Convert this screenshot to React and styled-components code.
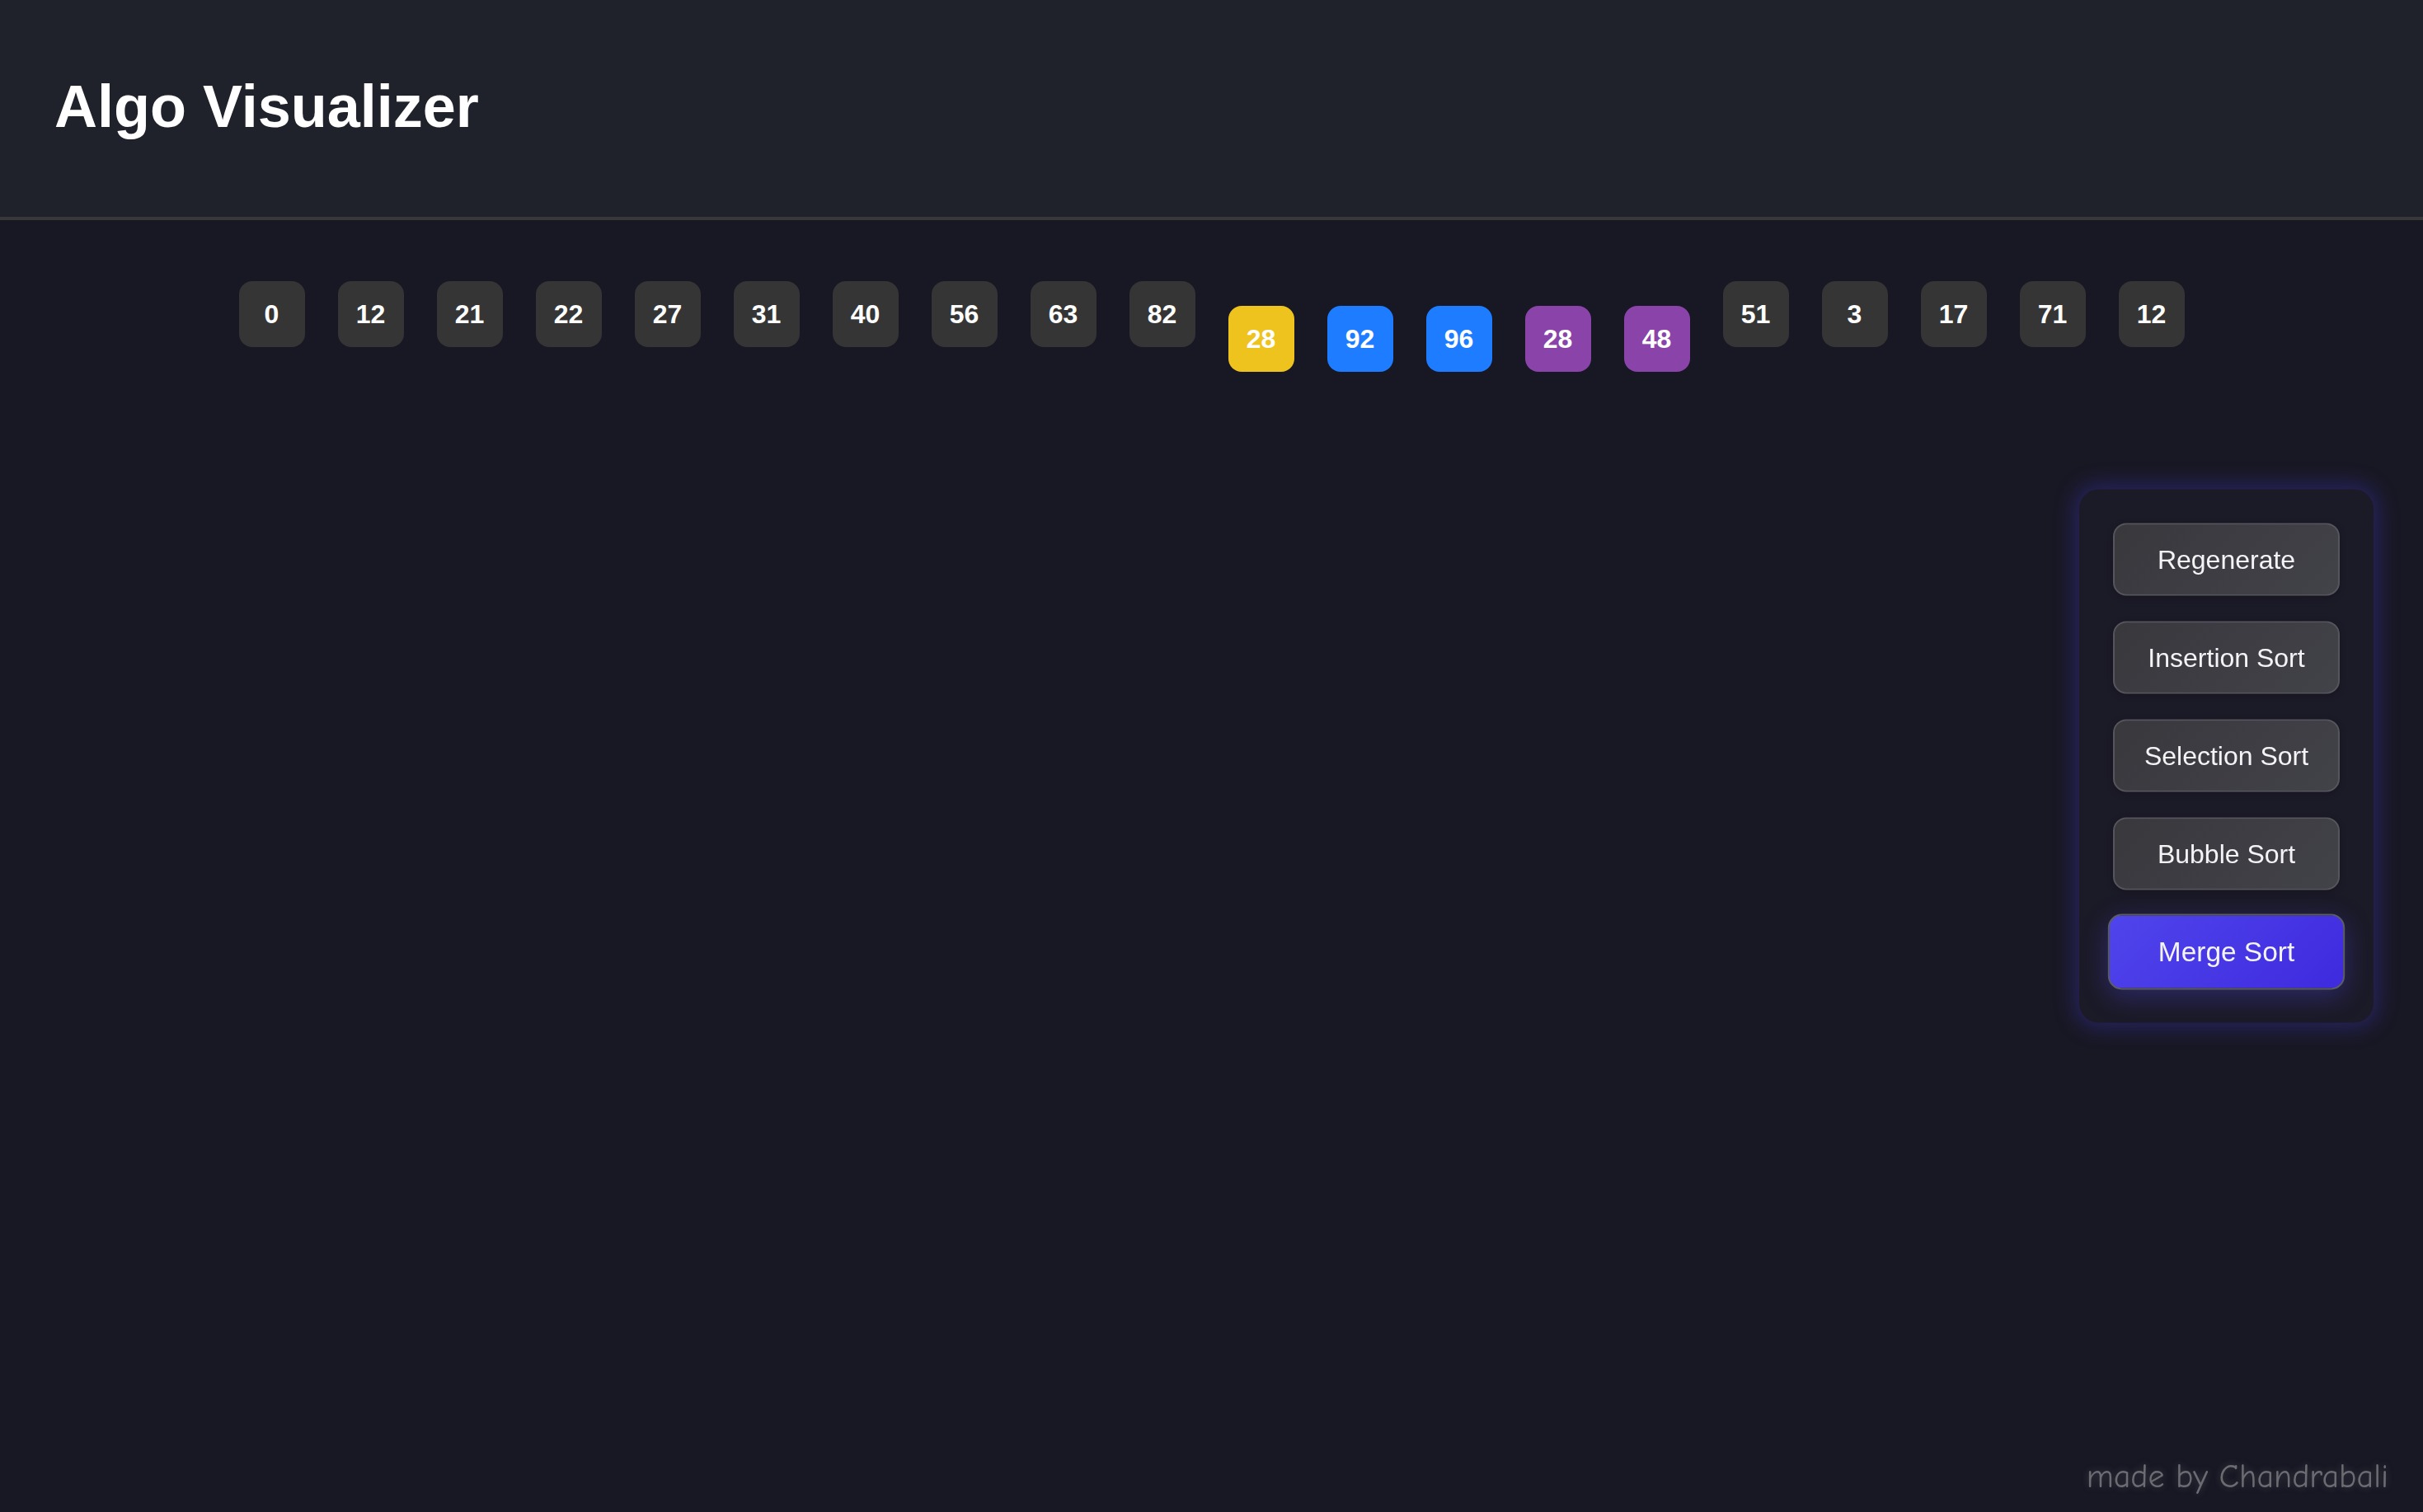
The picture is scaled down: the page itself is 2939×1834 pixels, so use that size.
import React from "react";
import styled, { createGlobalStyle } from "styled-components";

const GlobalStyle = createGlobalStyle`
  html, body {
    margin: 0;
    padding: 0;
    background: #181824;
    font-family: "Liberation Sans", Arial, sans-serif;
  }
  #root {
    min-height: 100vh;
  }
`;

function App() {
  const bars = [
    { v: 0 }, { v: 12 }, { v: 21 }, { v: 22 }, { v: 27 }, { v: 31 }, { v: 40 },
    { v: 56 }, { v: 63 }, { v: 82 },
    { v: 28, state: "current" },
    { v: 92, state: "compare" },
    { v: 96, state: "compare" },
    { v: 28, state: "merge" },
    { v: 48, state: "merge" },
    { v: 51 }, { v: 3 }, { v: 17 }, { v: 71 }, { v: 12 },
  ];

  const algos = ["Regenerate", "Insertion Sort", "Selection Sort", "Bubble Sort", "Merge Sort"];

  return (
    <Page>
      <GlobalStyle />
      <Header>
        <Title>Algo Visualizer</Title>
      </Header>
      <Stage>
        <ArrayRow>
          {bars.map((b, i) => (
            <Cell key={i} $state={b.state}>
              {b.v}
            </Cell>
          ))}
        </ArrayRow>
      </Stage>
      <Controls>
        {algos.map((a) => (
          <ControlButton key={a} $active={a === "Merge Sort"}>
            {a}
          </ControlButton>
        ))}
      </Controls>
      <Credit>made by Chandrabali</Credit>
    </Page>
  );
}

const Page = styled.div`
  min-height: 100vh;
  display: flex;
  flex-direction: column;
  background: #181824;
  color: #ffffff;
`;

const Header = styled.header`
  height: 267px;
  display: flex;
  align-items: center;
  padding: 0 66px 6px;
  box-sizing: border-box;
  background: #1f222a;
  border-bottom: 4px solid #383838;
`;

const Title = styled.h1`
  margin: 0;
  font-size: 72px;
  font-weight: 700;
  color: #ffffff;
`;

const Stage = styled.main`
  flex: 1;
  padding-top: 74px;
`;

const ArrayRow = styled.div`
  display: flex;
  justify-content: center;
  align-items: flex-start;
  gap: 40px;
`;

const cellColors = {
  current: "#efc31d",
  compare: "#1d7cff",
  merge: "#8a43a8",
};

const Cell = styled.div`
  width: 80px;
  height: 80px;
  flex-shrink: 0;
  display: flex;
  align-items: center;
  justify-content: center;
  border-radius: 16px;
  background: ${(p) => cellColors[p.$state] || "#353535"};
  margin-top: ${(p) => (p.$state ? "30px" : "0")};
  font-size: 32px;
  font-weight: 700;
  color: #ffffff;
`;

const Controls = styled.aside`
  position: fixed;
  right: 60px;
  top: 50%;
  transform: translateY(-50%);
  width: 275px;
  display: flex;
  flex-direction: column;
  gap: 31px;
  padding: 41px 41px 42px;
  background: #1b1a27;
  border-radius: 24px;
  box-shadow: 0 0 24px 6px rgba(68, 58, 200, 0.35);
`;

const ControlButton = styled.button`
  height: 88px;
  width: 100%;
  border-radius: 16px;
  border: 2px solid ${(p) => (p.$active ? "#5c5c66" : "#55555c")};
  background: ${(p) =>
    p.$active
      ? "linear-gradient(135deg, #4f45ec 0%, #3f2ade 100%)"
      : "linear-gradient(135deg, #38383d 0%, #424249 100%)"};
  color: #f4f4f6;
  font-family: "Liberation Sans", Arial, sans-serif;
  font-size: 32px;
  font-weight: 400;
  transform: ${(p) => (p.$active ? "scale(1.045)" : "none")};
  box-shadow: ${(p) =>
    p.$active ? "0 8px 30px rgba(79, 70, 229, 0.35)" : "0 2px 8px rgba(0, 0, 0, 0.2)"};
  cursor: pointer;
`;

const Credit = styled.div`
  position: fixed;
  right: 42px;
  bottom: 20px;
  font-family: "Comic Sans MS", "Comic Neue", "DejaVu Sans", sans-serif;
  font-size: 40px;
  color: #6b6b72;
  text-shadow: 0 0 8px rgba(140, 140, 150, 0.35);
`;

export default App;
